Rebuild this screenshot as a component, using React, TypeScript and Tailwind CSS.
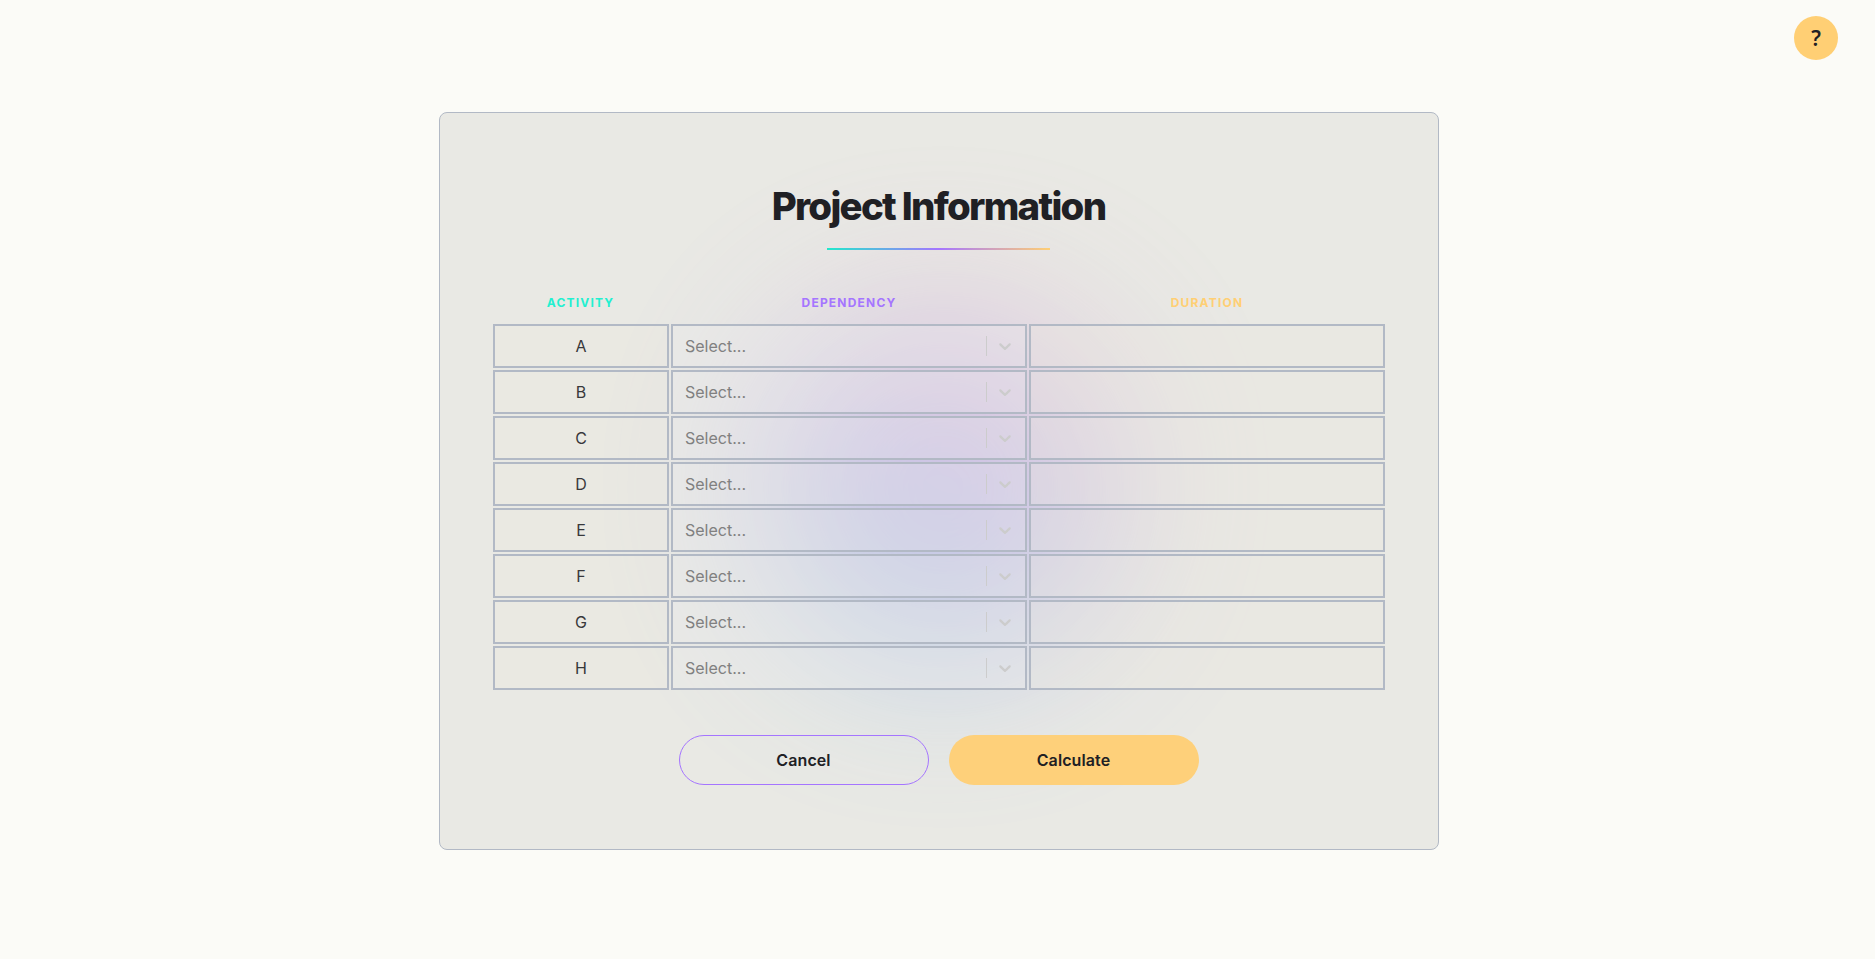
const activities = ['A', 'B', 'C', 'D', 'E', 'F', 'G', 'H'];

const columns = 'grid grid-cols-[176px_356px_356px] gap-x-0.5';

function Row({ name }: { name: string }) {
  return (
    <div className={columns}>
      <div className="flex h-11 items-center justify-center border-2 border-[#b2b9c5] bg-[#ebe9df]/40 pl-px text-base text-[#38383b]">
        {name}
      </div>
      <div className="flex h-11 items-center border-2 border-[#b2b9c5] bg-[#ececea]/30 pr-0.5">
        <span className="flex-1 pl-[12.5px] text-base text-[#808080]">Select...</span>
        <span className="h-5 w-px bg-[#cccccc]" />
        <span className="flex w-9 items-center justify-center text-[#cccccc]">
          <svg width="20" height="20" viewBox="0 0 20 20" fill="currentColor" aria-hidden="true">
            <path d="M4.516 7.548c0.436-0.446 1.043-0.481 1.576 0l3.908 3.747 3.908-3.747c0.533-0.481 1.141-0.446 1.574 0 0.436 0.445 0.408 1.197 0 1.615-0.406 0.418-4.695 4.502-4.695 4.502-0.217 0.223-0.502 0.335-0.787 0.335s-0.57-0.112-0.789-0.335c0 0-4.287-4.084-4.695-4.502s-0.436-1.17 0-1.615z" />
          </svg>
        </span>
      </div>
      <div className="h-11 border-2 border-[#b2b9c5] bg-[#ebe9df]/35" />
    </div>
  );
}

export default function App() {
  return (
    <div className="relative flex h-[959px] w-full justify-center overflow-hidden bg-[#fbfbf7] pt-28 pl-[2px] font-[Inter,sans-serif] text-[#202024]">
      <div className="absolute top-[312px] left-[768px] size-[350px] rounded-full bg-[linear-gradient(22deg,#40e0ff,#8484ff_38%,#b080ff_60%,#ff98b8)] opacity-45 blur-[85px]" />
      <button className="absolute top-4 right-[37px] flex size-11 items-center justify-center rounded-full bg-[#ffcf74] pt-0.5 font-['Noto_Sans'] text-[21px] font-semibold">
        ?
      </button>
      <main className="relative flex h-[738px] w-[1000px] flex-col items-center rounded-lg border border-[#b2b9c5] bg-[#b2b4ac]/25">
        <h1 className="mt-[68px] text-[38.4px] leading-[51px] font-extrabold tracking-[-1.7px]">Project Information</h1>
        <div className="mt-4 h-0.5 w-[223px] bg-[linear-gradient(90deg,#22e8cc,#a575ff,#ffcf74)]" />
        <div className={`${columns} mt-[45px] text-center text-xs leading-4 font-bold tracking-[1.2px]`}>
          <span className="text-[#22f0d0]">ACTIVITY</span>
          <span className="pl-px text-[#a575ff]">DEPENDENCY</span>
          <span className="pl-px text-[#ffcf74]">DURATION</span>
        </div>
        <div className="mt-[13px] flex flex-col gap-0.5">
          {activities.map((name) => (
            <Row key={name} name={name} />
          ))}
        </div>
        <div className="mt-[45px] flex gap-5">
          <button className="h-[50px] w-[250px] rounded-full border border-[#a575ff] text-base font-semibold tracking-[0.1px]">Cancel</button>
          <button className="h-[50px] w-[250px] rounded-full bg-[#ffcf74]/95 text-base font-semibold tracking-[0.1px]">Calculate</button>
        </div>
      </main>
    </div>
  );
}
